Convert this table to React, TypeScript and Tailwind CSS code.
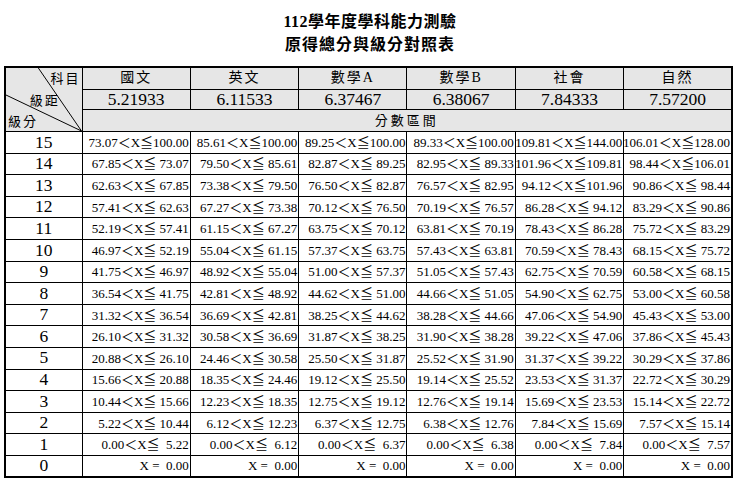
const serif = "font-['Liberation_Serif','Noto_Sans_CJK_TC',serif]";

const subjects = [
  { name: "國文", step: "5.21933", top: "100.00", lows: ["73.07", "67.85", "62.63", "57.41", "52.19", "46.97", "41.75", "36.54", "31.32", "26.10", "20.88", "15.66", "10.44", "5.22", "0.00"] },
  { name: "英文", step: "6.11533", top: "100.00", lows: ["85.61", "79.50", "73.38", "67.27", "61.15", "55.04", "48.92", "42.81", "36.69", "30.58", "24.46", "18.35", "12.23", "6.12", "0.00"] },
  { name: "數學A", step: "6.37467", top: "100.00", lows: ["89.25", "82.87", "76.50", "70.12", "63.75", "57.37", "51.00", "44.62", "38.25", "31.87", "25.50", "19.12", "12.75", "6.37", "0.00"] },
  { name: "數學B", step: "6.38067", top: "100.00", lows: ["89.33", "82.95", "76.57", "70.19", "63.81", "57.43", "51.05", "44.66", "38.28", "31.90", "25.52", "19.14", "12.76", "6.38", "0.00"] },
  { name: "社會", step: "7.84333", top: "144.00", lows: ["109.81", "101.96", "94.12", "86.28", "78.43", "70.59", "62.75", "54.90", "47.06", "39.22", "31.37", "23.53", "15.69", "7.84", "0.00"] },
  { name: "自然", step: "7.57200", top: "128.00", lows: ["106.01", "98.44", "90.86", "83.29", "75.72", "68.15", "60.58", "53.00", "45.43", "37.86", "30.29", "22.72", "15.14", "7.57", "0.00"] },
];

// pad the upper bound so the columns line up like the printed table
const pad = (s: string) => " ".repeat(Math.max(0, 6 - s.length)) + s;

const range = (lows: string[], top: string, i: number) => {
  const upper = i === 0 ? top : lows[i - 1];
  return `${lows[i]}＜X≦${pad(upper)}`;
};

const grades = Array.from({ length: 15 }, (_, i) => 15 - i);

function RangeCell({ text }: { text: string }) {
  return (
    <td className="border border-black p-0">
      <div className="flex justify-end overflow-hidden whitespace-pre text-[13px] leading-none pr-[1px]">
        <span className="shrink-0">{text}</span>
      </div>
    </td>
  );
}

export default function App() {
  return (
    <div className={`w-[740px] h-[487px] bg-white text-black pt-[10px] ${serif}`}>
      <div className="text-center font-bold text-[16px] leading-[23px]">
        <div className="tracking-[0.5px]">112學年度學科能力測驗</div>
        <div className="tracking-[1px]">原得總分與級分對照表</div>
      </div>

      <table className="mt-[10px] ml-[4px] w-[729px] table-fixed border-collapse border-2 border-black">
        <colgroup>
          <col className="w-[77px]" />
          {subjects.map((s) => (
            <col key={s.name} />
          ))}
        </colgroup>
        <tbody>
          <tr className="h-[22px] bg-[#e6e6e6]">
            <td rowSpan={3} className="border border-black p-0 align-top">
              <div className="relative h-[63px] flex flex-col text-[13px] leading-[20px] tracking-[2px]">
                <svg className="absolute inset-0 w-full h-full" viewBox="0 0 77 63" preserveAspectRatio="none">
                  <line x1="33" y1="0" x2="77" y2="63" stroke="black" strokeWidth="1" />
                  <line x1="0" y1="27" x2="77" y2="63" stroke="black" strokeWidth="1" />
                </svg>
                <span className="self-end pr-[1px] pt-[1px]">科目</span>
                <span className="self-center pl-[2px] pt-[2px]">級距</span>
                <span className="self-start pl-[2px] pt-[1px]">級分</span>
              </div>
            </td>
            {subjects.map((s) => (
              <td key={s.name} className="border border-black text-center text-[14px] tracking-[2px] leading-none p-0">
                {s.name}
              </td>
            ))}
          </tr>
          <tr className="h-[20px] bg-[#e6e6e6]">
            {subjects.map((s) => (
              <td key={s.name} className="border border-black text-center text-[17.5px] leading-none p-0">
                {s.step}
              </td>
            ))}
          </tr>
          <tr className="h-[22px] bg-[#e6e6e6]">
            <td colSpan={6} className="border border-black text-center text-[13px] tracking-[3px] leading-none p-0">
              分數區間
            </td>
          </tr>
          {grades.map((g, i) => (
            <tr key={g} className="h-[21.6px]">
              <td className="border border-black text-center text-[17.5px] leading-none p-0">{g}</td>
              {subjects.map((s) => (
                <RangeCell key={s.name} text={range(s.lows, s.top, i)} />
              ))}
            </tr>
          ))}
          <tr className="h-[21.6px]">
            <td className="border border-black text-center text-[17.5px] leading-none p-0">0</td>
            {subjects.map((s) => (
              <RangeCell key={s.name} text="X =  0.00" />
            ))}
          </tr>
        </tbody>
      </table>
    </div>
  );
}
